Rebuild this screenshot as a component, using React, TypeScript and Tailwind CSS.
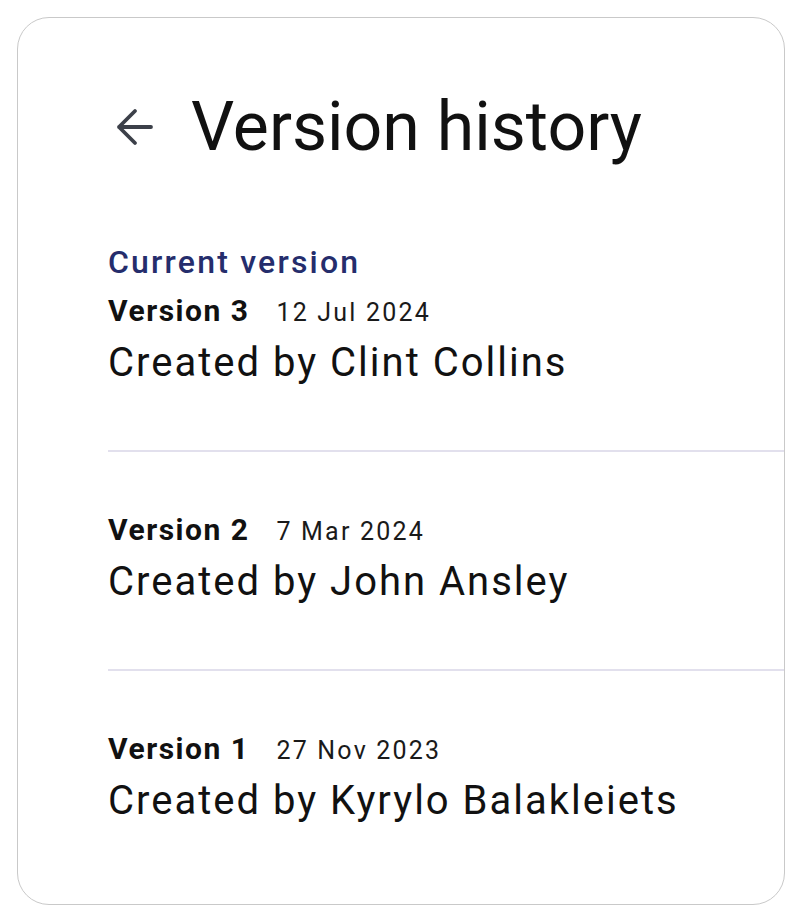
import React from "react";

const versions = [
  { id: 3, date: "12 Jul 2024", author: "Clint Collins", current: true },
  { id: 2, date: "7 Mar 2024", author: "John Ansley", current: false },
  { id: 1, date: "27 Nov 2023", author: "Kyrylo Balakleiets", current: false },
];

function BackArrow() {
  return (
    <svg width="40" height="40" viewBox="0 0 40 40" fill="none" className="ml-[7px] shrink-0">
      <path
        d="M36 20H4M20 4L4 20l16 16"
        stroke="#3c4049"
        strokeWidth="3.8"
        strokeLinecap="round"
        strokeLinejoin="round"
      />
    </svg>
  );
}

export default function App() {
  return (
    <div className="min-h-screen bg-white p-[17px] pr-[16px] font-['Roboto',sans-serif]">
      <div className="h-[888px] rounded-[32px] border border-[#c9c9c9] bg-white pl-[90px] pt-[74px]">
        <div className="flex items-center">
          <BackArrow />
          <h1 className="ml-[36px] text-[68px] leading-[70px] font-normal text-[#111111]">
            Version history
          </h1>
        </div>

        <ul className="mt-[82px]">
          {versions.map((v, i) => (
            <li key={v.id}>
              {i > 0 && <div className="h-[2px] bg-[#e2e0ed]" />}
              <div className={i > 0 ? "pt-[60px] pb-[65px]" : "pb-[65px]"}>
                {v.current && (
                  <p className="mb-[13px] text-[32px] leading-[36px] font-medium tracking-[2.2px] text-[#252d6c]">
                    Current version
                  </p>
                )}
                <div className="flex items-baseline">
                  <span className="text-[30px] leading-[36px] font-bold tracking-[1.5px] text-[#111111]">
                    Version {v.id}
                  </span>
                  <span className="ml-[27px] text-[25px] leading-[36px] tracking-[2.2px] text-[#1a1a1a]">
                    {v.date}
                  </span>
                </div>
                <p className="mt-[10px] text-[40px] leading-[44px] tracking-[2px] text-[#111111]">
                  Created by {v.author}
                </p>
              </div>
            </li>
          ))}
        </ul>
      </div>
    </div>
  );
}
